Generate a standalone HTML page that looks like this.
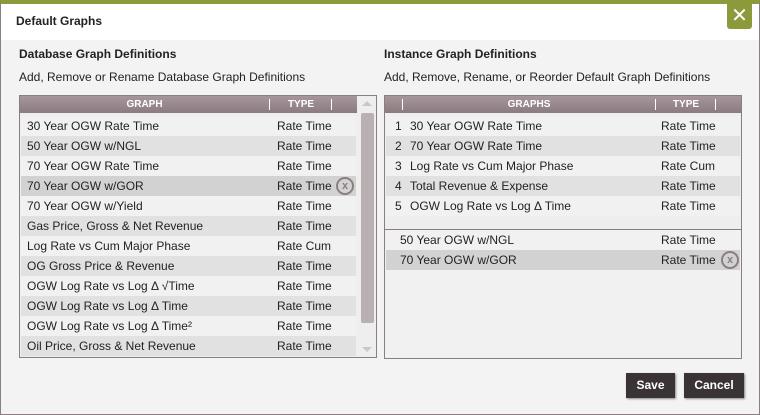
<!DOCTYPE html>
<html><head><meta charset="utf-8"><style>
*{margin:0;padding:0;box-sizing:border-box}
body{width:760px;height:415px;overflow:hidden;font-family:"Liberation Sans","DejaVu Sans",sans-serif;color:#222;background:#f3f3f3;position:relative}
.dlg{position:absolute;left:0;top:0;width:760px;height:415px;border:1px solid #8a7e80;border-top:4px solid #8d9a3c;background:#f3f3f3}
.hdr{position:absolute;left:0;top:0;width:758px;height:36px;background:#fff}
.t{position:absolute;font-size:12px;white-space:nowrap}
.b{font-weight:bold}
.close{position:absolute;left:727px;top:4px;width:25px;height:25px;background:#8d9a3c;border-radius:0 0 3px 3px;color:#fff;font-size:20px;font-weight:bold;text-align:center;line-height:24px}
.tbl{position:absolute;border:1px solid #8a7e80;background:#eeeeee}
.th{position:absolute;left:0;top:0;height:17px;background:linear-gradient(#a6979b,#8b7b80);color:#fff;font-size:10px;font-weight:bold;line-height:17px}
.th span{position:absolute;text-align:center}
.sep{position:absolute;top:3px;width:1px;height:11px;background:#fff}
.row{position:absolute;height:20px;font-size:12px;line-height:20px;white-space:nowrap}
.row span{position:absolute}
.x{position:absolute;width:18px;height:18px;border:2px solid #8a7e80;border-radius:50%;color:#8a7e80;font-size:11px;font-weight:bold;line-height:14px;text-align:center}
.btn{position:absolute;top:373px;height:25px;background:#3a3335;color:#fff;font-weight:bold;font-size:12px;text-align:center;line-height:25px;box-shadow:1px 1px 2px #888}
</style></head><body>
<div class="dlg">
<div class="hdr"></div>
</div>
<div class="close">✕</div>
<div class="t b" style="left:16px;top:14px">Default Graphs</div>
<div class="t b" style="left:19px;top:47px">Database Graph Definitions</div>
<div class="t" style="left:19px;top:70px">Add, Remove or Rename Database Graph Definitions</div>
<div class="t b" style="left:384px;top:47px">Instance Graph Definitions</div>
<div class="t" style="left:384px;top:70px">Add, Remove, Rename, or Reorder Default Graph Definitions</div>

<div class="tbl" style="left:19px;top:95px;width:358px;height:263px">
 <div class="th" style="width:337px"><span style="left:0;width:249px">GRAPH</span><div class="sep" style="left:249px"></div><span style="left:250px;width:62px">TYPE</span><div class="sep" style="left:311px"></div></div>
 <div style="position:absolute;left:338px;top:0;width:18px;height:261px;background:#eeeeee"></div>
 <div style="position:absolute;left:342px;top:5px;width:0;height:0;border-left:5px solid transparent;border-right:5px solid transparent;border-bottom:5px solid #c8c8c8"></div>
 <div style="position:absolute;left:341px;top:17px;width:13px;height:210px;background:#b9b0b2;border-radius:2px"></div>
 <div style="position:absolute;left:342px;top:251px;width:0;height:0;border-left:5px solid transparent;border-right:5px solid transparent;border-top:5px solid #c8c8c8"></div>
 <div id="L"></div>
</div>

<div class="tbl" style="left:384px;top:95px;width:358px;height:264px">
 <div class="th" style="width:356px"><div class="sep" style="left:17px"></div><span style="left:18px;width:252px">GRAPHS</span><div class="sep" style="left:270px"></div><span style="left:271px;width:60px">TYPE</span><div class="sep" style="left:330px"></div></div>
 <div style="position:absolute;left:0;top:133px;width:356px;height:1px;background:#8a7e80"></div>
 <div style="position:absolute;left:0;top:134px;width:356px;height:128px;background:#f1f1f1"></div>
 <div id="R"></div>
</div>

<div class="btn" style="left:626px;width:49px">Save</div>
<div class="btn" style="left:684px;width:60px">Cancel</div>

<script>
var L=[["30 Year OGW Rate Time","Rate Time"],["50 Year OGW w/NGL","Rate Time"],["70 Year OGW Rate Time","Rate Time"],["70 Year OGW w/GOR","Rate Time",1],["70 Year OGW w/Yield","Rate Time"],["Gas Price, Gross &amp; Net Revenue","Rate Time"],["Log Rate vs Cum Major Phase","Rate Cum"],["OG Gross Price &amp; Revenue","Rate Time"],["OGW Log Rate vs Log Δ √Time","Rate Time"],["OGW Log Rate vs Log Δ Time","Rate Time"],["OGW Log Rate vs Log Δ Time²","Rate Time"],["Oil Price, Gross &amp; Net Revenue","Rate Time"]];
var h="";L.forEach(function(r,i){var bg=r[2]?"#d2d2d2":(i%2?"#e1e1e1":"#f1f1f1");h+='<div class="row" style="left:1px;top:'+(20+i*20)+'px;width:335px;background:'+bg+'"><span style="left:6px">'+r[0]+'</span><span style="left:256px">'+r[1]+'</span>'+(r[2]?'<div class="x" style="left:315px;top:1px">x</div>':'')+'</div>';});
document.getElementById("L").innerHTML=h;
var R=[["30 Year OGW Rate Time","Rate Time"],["70 Year OGW Rate Time","Rate Time"],["Log Rate vs Cum Major Phase","Rate Cum"],["Total Revenue &amp; Expense","Rate Time"],["OGW Log Rate vs Log Δ Time","Rate Time"]];
h="";R.forEach(function(r,i){var bg=i%2?"#e1e1e1":"#f1f1f1";h+='<div class="row" style="left:1px;top:'+(20+i*20)+'px;width:354px;background:'+bg+'"><span style="left:9px">'+(i+1)+'</span><span style="left:24px">'+r[0]+'</span><span style="left:275px">'+r[1]+'</span></div>';});
h+='<div class="row" style="left:1px;top:134px;width:354px;background:#f1f1f1"><span style="left:14px">50 Year OGW w/NGL</span><span style="left:275px">Rate Time</span></div>';
h+='<div class="row" style="left:1px;top:154px;width:354px;background:#d2d2d2"><span style="left:14px">70 Year OGW w/GOR</span><span style="left:275px">Rate Time</span><div class="x" style="left:335px;top:1px">x</div></div>';
document.getElementById("R").innerHTML=h;
</script>
</body></html>
